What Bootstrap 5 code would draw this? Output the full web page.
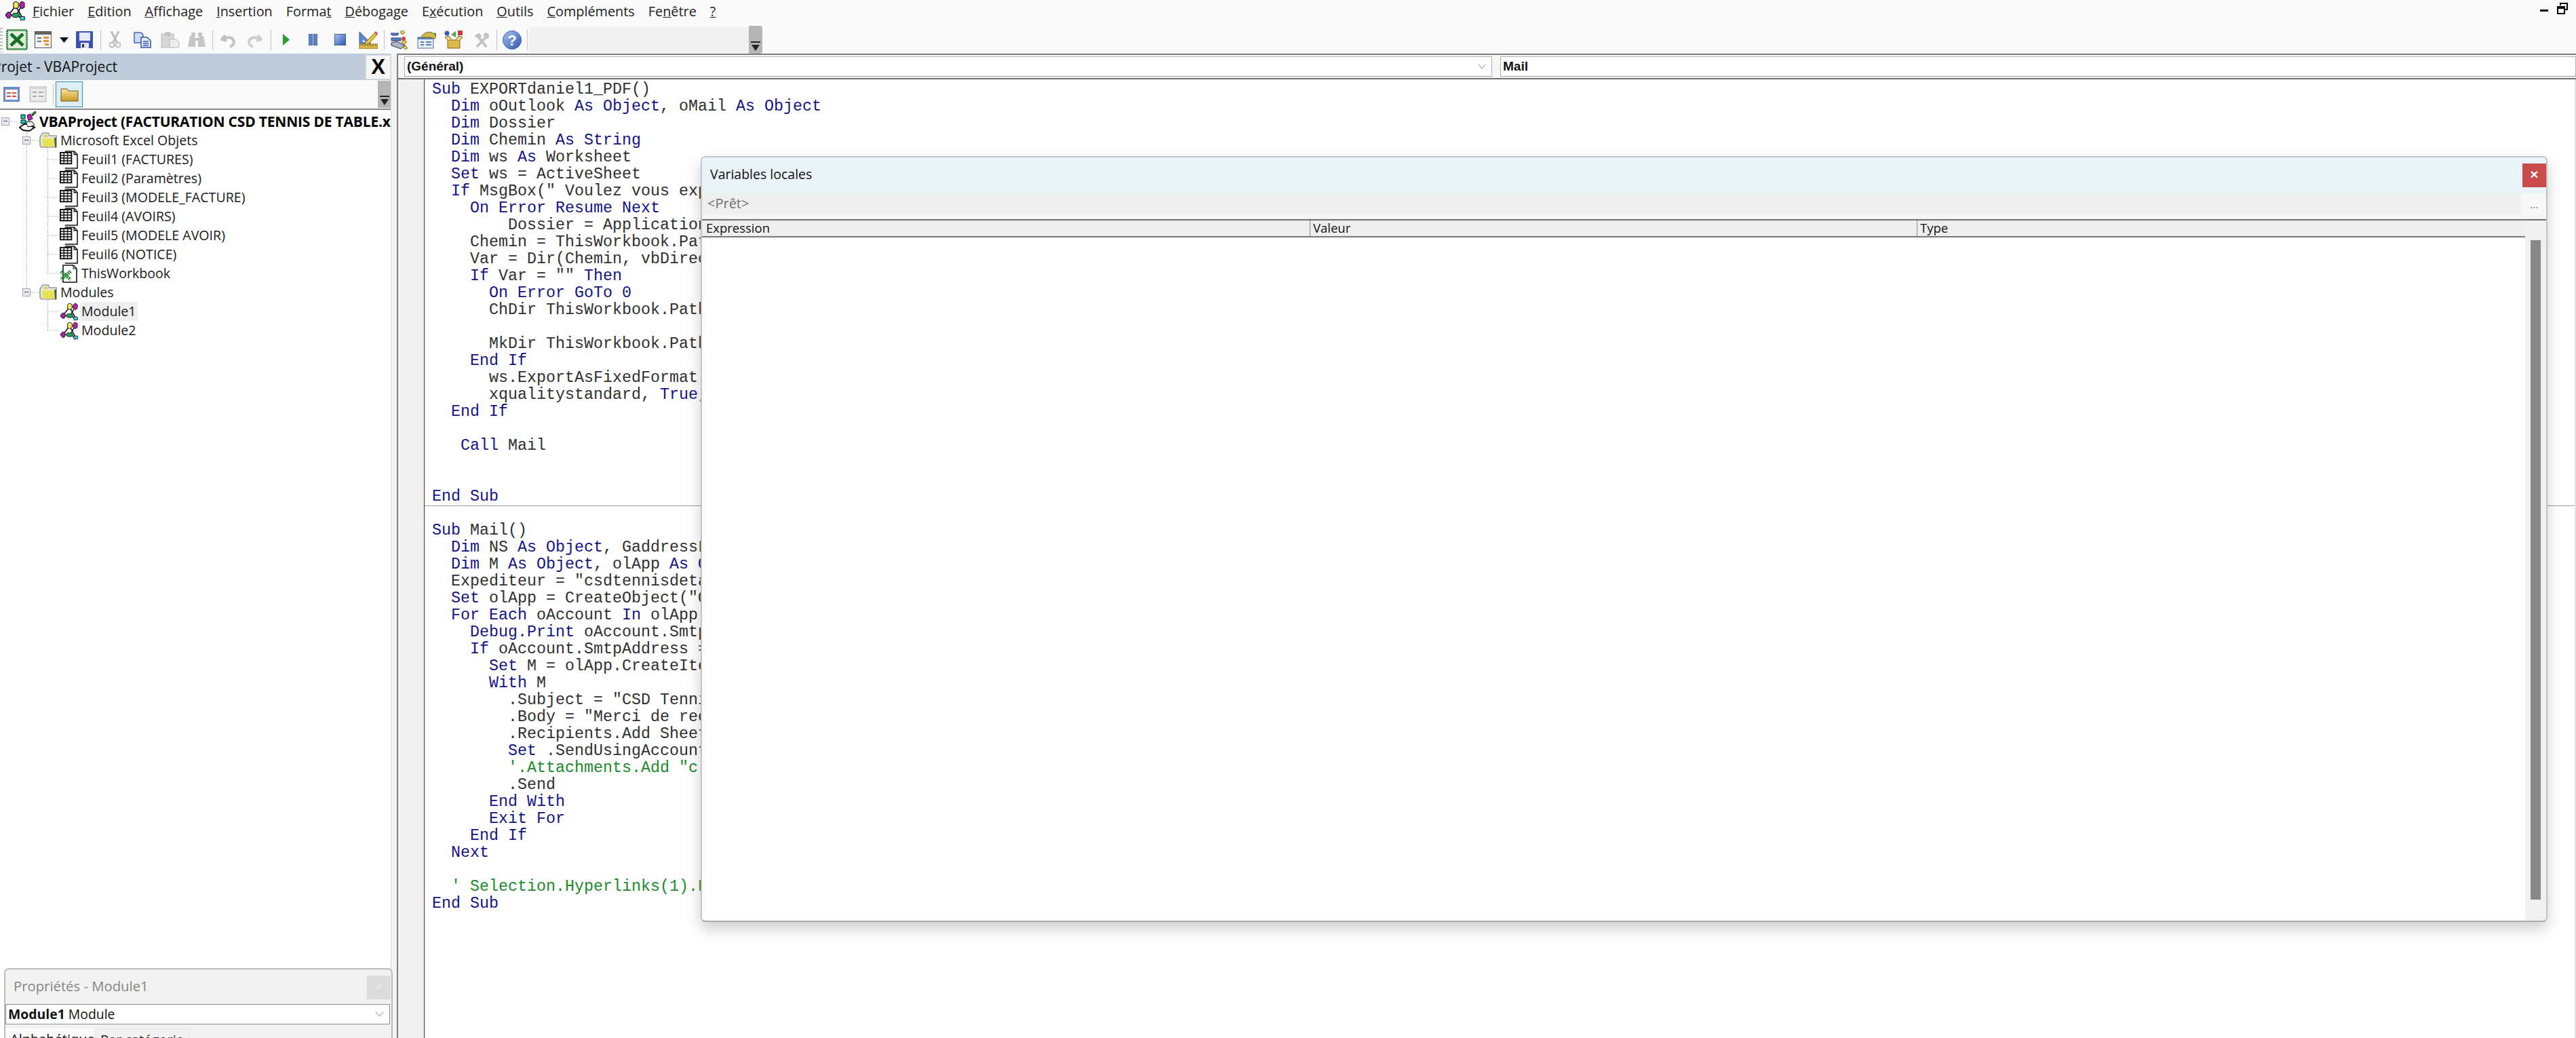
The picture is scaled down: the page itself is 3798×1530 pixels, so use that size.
<!DOCTYPE html>
<html lang="fr">
<head>
<meta charset="utf-8">
<title>Microsoft Visual Basic for Applications</title>
<link href="https://cdn.jsdelivr.net/npm/bootstrap@5.3.0/dist/css/bootstrap.min.css" rel="stylesheet">
<style>
html,body{height:1530px;width:3798px;overflow:hidden;background:#fff;margin:0;font-family:"Open Sans","Noto Sans",sans-serif;font-size:19px;color:#111}
.svg-defs{position:absolute;width:0;height:0;overflow:hidden}
.vbe-top{background:#fafafa;height:79px}
.vbe-menu{height:38px;padding-left:7px;align-items:center}
.app-ic{margin-right:11px;margin-top:-6px}
.menu-item{margin-right:20px;line-height:1;color:#222;font-size:19.85px;margin-top:-4px;white-space:nowrap}
.win-ctl{margin-left:auto;margin-right:12px;gap:13px;align-self:flex-start;padding-top:4px}
.tbar{height:41px;align-items:center}
.grip-dots{width:4px;height:36px;background:repeating-linear-gradient(#bbb 0 2px,transparent 2px 5px)}
.tsep{width:1px;height:30px;background:#c4c4c4;flex:none}
.ml8{margin-left:8px}.ml9{margin-left:9px}.ml10{margin-left:10px}.ml11{margin-left:11px}.ml12{margin-left:12px}.ml14{margin-left:14px}.ml16{margin-left:16px}.ml17{margin-left:17px}.ml19{margin-left:19px}.ml25{margin-left:25px}.ml28{margin-left:28px}.ml5{margin-left:5px}.ml2{margin-left:2px}
.tb-empty{width:324px;height:38px;background:#f0f0f0}
.tb-grip{width:20px;height:41px;background:#b5b5b5;border-radius:0 4px 4px 0;display:flex;flex-direction:column;justify-content:flex-end;align-items:center;padding-bottom:4px;flex:none}
.grip-bar{width:14px;height:2px;background:#222;margin-bottom:3px}
.grip-arrow{width:0;height:0;border-left:6px solid transparent;border-right:6px solid transparent;border-top:9px solid #222}
.vbe-main{height:1451px;position:relative}
.proj-panel{width:577px;flex:none;height:100%;position:relative;overflow:hidden;border-right:1px solid #ddd}
.proj-title{height:39px;background:#bfcddb;padding-left:0;align-items:center;position:relative}
.proj-title span{margin-left:-11px;font-size:21px;color:#111;white-space:nowrap}
.proj-x{margin-left:auto;width:37px;height:36px;background:#f6f6f6;border:1px solid #ddd;font-family:"Liberation Sans",sans-serif;font-weight:700;font-size:31px;line-height:34px;text-align:center;color:#000}
.proj-tools{height:44px;background:#fafafa;align-items:center;border-bottom:2px solid #888}
.ptool-sel{width:40px;height:38px;border:1px solid #2e8dc0;background:#deeef8;display:flex;align-items:center;justify-content:center;margin-left:3px}
.ptool-grip{width:19px;height:40px;margin-left:auto;background:#b5b5b5;display:flex;flex-direction:column;justify-content:flex-end;align-items:center;padding-bottom:4px}
.ptool-sep{width:1px;height:30px;background:#c4c4c4;margin-left:9px}
.tree{position:relative;padding-top:3px;font-size:19.6px}
.tree-lines{position:absolute;left:0;top:0}
.tree-row{height:28px;display:flex;align-items:center;white-space:nowrap;position:relative}
.tree-row svg{flex:none}
.d0{padding-left:2px}.d1{padding-left:33px}.d2{padding-left:88px}
.tbox{width:12px;height:12px;background:#e6e8ee;border:1px solid #a6aab2;position:relative;flex:none}
.tbox::after{content:"";position:absolute;left:2px;right:2px;top:4px;height:1px;background:#45506a}
.d0 .tbox{margin-right:11px}.d1 .tbox{margin-right:13px}
.lbl{padding:0 2px;line-height:28px;color:#1a1a1a}
.d0 .lbl{font-weight:700;color:#000;margin-left:1px;font-size:21px;letter-spacing:-.2px}
.d1 .lbl{margin-left:3px}.d2 .lbl{margin-left:3px}
.lbl-sel{background:#efefef}
.prop-win{position:absolute;left:6px;top:1348px;width:573px;height:110px;background:#f2f2f2;border:2px solid #bcbcbc;border-bottom:0;border-radius:7px 7px 0 0;overflow:hidden}
.prop-title{height:51px;padding-left:12px;padding-bottom:3px;color:#858585;font-size:20.3px;align-items:center;position:relative}
.prop-x{position:absolute;right:1px;top:9px;width:35px;height:35px;background:#dcdcdc;color:#f0f0f0;font-size:16px;line-height:33px;text-align:center}
.prop-combo{height:30px;margin:0 2px 0 0;background:#fff;border:1px solid #8d8d8d;padding-left:3px;align-items:center;font-size:19.4px;color:#111;position:relative}
.chev{margin-left:auto;margin-right:8px}
.prop-tabs{padding-top:6px;font-size:20px}
.ptab{padding:0 7px;height:30px;line-height:31px}
.ptab-on{background:#fafafa;width:130px}.ptab-off{border:1px solid #e8e8e8;margin-left:2px;color:#222}
.splitter{width:8px;flex:none;background:#f3f3f3}
.code-area{flex:1 1 auto;border-left:2px solid #7f7f7f;min-width:0;height:100%;display:flex;flex-direction:column}
.combo-row{height:38px;flex:none;background:#f6f6f6;border-top:2px solid #7d7d7d;border-bottom:2px solid #6f6f6f;padding:2px 0 2px 9px;gap:12px}
.vcombo{height:30px;background:#fff;border:1px solid #b0b0b0;border-bottom-color:#999;font-family:"Liberation Sans",sans-serif;font-weight:700;font-size:19px;line-height:28px;padding-left:3px;color:#111;position:relative;display:flex;align-items:center}
.vcombo-a{width:1604px;flex:none}
.vcombo-b{flex:1 1 auto}
.code-pane{flex:1 1 auto;min-height:0;display:flex;overflow:hidden}
.code-margin{width:38px;flex:none;background:#f0f0f0;border-right:1px solid #333;box-sizing:content-box}
.code-body{flex:1 1 auto;min-width:0;overflow:hidden;padding-top:3px;border-right:2px solid #e2e2e2}
.proc{margin:0;padding:0 0 0 11px;font-family:"Liberation Mono","DejaVu Sans Mono",monospace;font-size:23.33px;line-height:25px;color:#303030;white-space:pre;overflow:hidden}
.proc-first{border-bottom:1px solid #9a9a9a;margin-bottom:-1px}
.kw{color:#14148a}
.cm{color:#1a8a2a}
.watch-win{position:absolute;left:1033px;top:230px;width:2723px;height:1129px;background:#fff;border:2px solid #c4c4c4;border-bottom-color:#aaa;border-radius:7px;box-shadow:0 10px 22px rgba(0,0,0,.2);overflow:hidden;display:flex;flex-direction:column;z-index:5}
.watch-title{height:53px;flex:none;background:#e9f3f8;padding-left:12px;padding-bottom:3px;align-items:center;position:relative;font-size:19.5px;color:#111}
.watch-x{position:absolute;right:0;top:9px;width:35px;height:35px;background:#c94b4b;color:#fff;font-family:"Liberation Sans",sans-serif;font-weight:700;font-size:21px;line-height:32px;text-align:center}
.watch-sub{height:38px;flex:none;background:#f4f4f4;position:relative;padding-left:0}
.watch-ctx{width:2680px;height:31px;background:#efefef;color:#707070;padding-left:8px;font-size:20px;line-height:30px;flex:none}
.watch-dots{position:absolute;right:1px;top:1px;width:33px;height:29px;background:#f8f8f8;color:#777;text-align:center;font-size:15px;line-height:30px}
.watch-body{flex:1 1 auto;min-height:0;border-top:2px solid #6e6e6e;display:flex}
.watch-main{flex:1 1 auto;min-width:0}
.watch-head{height:25px;background:#efefef;border-bottom:2px solid #777;display:grid;grid-template-columns:896px 895px 1fr;font-size:18.5px;line-height:22px;color:#111}
.watch-head div{padding-left:6px;white-space:nowrap}
.watch-head div+div{border-left:1px solid #8a8a8a;padding-left:4px}
.watch-scroll{width:31px;flex:none;background:#f0f0f0;padding:29px 8px 31px}
.watch-thumb{height:100%;background:#888;width:15px}
</style>
</head>
<body>
<svg class="svg-defs" aria-hidden="true">
  <defs>
  <linearGradient id="gblue" x1="0" y1="0" x2="1" y2="1"><stop offset="0" stop-color="#a9c4ee"/><stop offset="1" stop-color="#2e55b0"/></linearGradient>
  <linearGradient id="gfold" x1="0" y1="0" x2="0" y2="1"><stop offset="0" stop-color="#fbe29a"/><stop offset="1" stop-color="#c99a26"/></linearGradient>
  </defs>
  <symbol id="mod" viewBox="0 0 28 28">
    <path d="M5 20 15 7M5 20h11l9 5M15 7l9-1M15 7l10 18M24 6 16 20" stroke="#111" stroke-width="1.6" fill="none"/>
    <path d="M1 20 4 16h3l2 4-2 4H4z" fill="#b21bb0" stroke="#222"/>
    <path d="M12 3l3-2 4 2v6l-4 2-3-2z" fill="#f1e65a" stroke="#222"/>
    <path d="M21 3l3-2 3 2v6l-3 2-3-2z" fill="#c11cb8" stroke="#222"/>
    <ellipse cx="15" cy="20" rx="5" ry="3" fill="#17a35a" stroke="#222"/>
    <path d="M21 22h6l1 4-6 1z" fill="#35d6d6" stroke="#222"/>
  </symbol>
  <symbol id="sheet" viewBox="0 0 28 28">
    <path d="M8 1h14l5 5v21H8" fill="#fff" stroke="#111" stroke-width="1.6"/>
    <path d="M22 1v5h5" fill="none" stroke="#111" stroke-width="1.4"/>
    <rect x="1" y="3" width="17" height="17" fill="#fff" stroke="#111" stroke-width="2"/>
    <path d="M1 7.500h17M1 11.500h17M1 15.500h17M6.500 3v17M12 3v17" stroke="#111" stroke-width="1.5"/>
  </symbol>
  <symbol id="fold" viewBox="0 0 26 24">
    <path d="M1 7 5 1h8l2 4h10v17H3L1 20z" fill="#e4e4e4" stroke="#777" stroke-width="1.2"/>
    <path d="M6 4h6l1 3H6z" fill="#ddd24d"/>
    <path d="M4 9h20v12H5z" fill="#ecec5a"/>
    <path d="M5 11h18M5 13h18M5 15h18M5 17h18M5 19h18" stroke="#c7c748" stroke-width=".9" stroke-dasharray="1.500 1.500"/>
    <path d="M22 8h3v14h-2z" fill="#555"/>
  </symbol>
</svg>

<header class="vbe-top">
  <nav class="vbe-menu d-flex">
    <svg class="app-ic" width="30" height="30" viewBox="0 0 28 28"><use href="#mod"/></svg>
    <span class="menu-item"><u>F</u>ichier</span>
    <span class="menu-item"><u>E</u>dition</span>
    <span class="menu-item"><u>A</u>ffichage</span>
    <span class="menu-item"><u>I</u>nsertion</span>
    <span class="menu-item">Forma<u>t</u></span>
    <span class="menu-item"><u>D</u>ébogage</span>
    <span class="menu-item">E<u>x</u>écution</span>
    <span class="menu-item"><u>O</u>utils</span>
    <span class="menu-item"><u>C</u>ompléments</span>
    <span class="menu-item">Fe<u>n</u>être</span>
    <span class="menu-item"><u>?</u></span>
    <div class="win-ctl d-flex">
      <svg width="12" height="14" viewBox="0 0 12 14"><rect y="10" width="12" height="3" fill="#000"/></svg>
      <svg width="16" height="18" viewBox="0 0 16 18"><path d="M5 4V1h10v9h-3" fill="none" stroke="#000" stroke-width="2"/><rect x="1" y="6" width="10" height="10" fill="none" stroke="#000" stroke-width="2"/><path d="M1 8h10" stroke="#000" stroke-width="2"/></svg>
    </div>
  </nav>
  <div class="tbar d-flex">
    <div class="grip-dots"></div>
    <svg class="ml5" width="32" height="31" viewBox="0 0 32 31"><rect x="1.500" y="1.500" width="29" height="28" fill="#dfeedd" stroke="#1c7a2c" stroke-width="3" stroke-dasharray="2 1"/><path d="M7 7 25 24M25 7 7 24" stroke="#1d6e2b" stroke-width="5"/></svg>
    <svg class="ml10" width="25" height="25" viewBox="0 0 25 25"><rect x=".5" y=".5" width="24" height="24" fill="#f4f4f4" stroke="#555"/><rect x="1" y="1" width="23" height="4" fill="#666"/><path d="M4 10h6M4 15h6" stroke="#777" stroke-width="2"/><path d="M13 8h8v3h-8zM13 13h8v3h-8zM15 18h6v3h-6z" fill="#e1953a"/></svg>
    <svg class="ml12" width="13" height="8" viewBox="0 0 13 8"><path d="M0 0h13L6.500 8z" fill="#111"/></svg>
    <svg class="ml11" width="25" height="25" viewBox="0 0 25 25"><rect width="25" height="25" rx="1" fill="#3e52b5"/><rect x="5" y="2" width="16" height="12" fill="#e6e9f8"/><rect x="7" y="17" width="12" height="8" fill="#dfe2ee"/><rect x="9" y="19" width="3" height="5" fill="#333"/></svg>
    <div class="tsep ml11"></div>
    <svg class="ml12" width="17" height="25" viewBox="0 0 17 25" fill="none" stroke="#bcbcbc" stroke-width="2"><path d="M3 0l8 16M14 0 6 16" stroke-width="3"/><circle cx="4" cy="20" r="3.500"/><circle cx="13" cy="20" r="3.500"/></svg>
    <svg class="ml19" width="26" height="24" viewBox="0 0 26 24"><path d="M1 1h10l3 3v12H1z" fill="#cfdcf4" stroke="#3e66b8" stroke-width="1.500"/><path d="M11 8h9l5 5v10H11z" fill="#e9f0fb" stroke="#2c55a8" stroke-width="1.500"/><path d="M14 14h8M14 17h8M14 20h8" stroke="#2c55a8" stroke-width="1.500"/></svg>
    <svg class="ml14" width="28" height="24" viewBox="0 0 28 24"><rect x="1" y="3" width="18" height="20" fill="#d6d6d6" stroke="#bbb"/><rect x="6" y="0" width="8" height="6" fill="#c4c4c4"/><path d="M13 11h10l4 4v8H13z" fill="#ececec" stroke="#bbb"/></svg>
    <svg class="ml12" width="26" height="24" viewBox="0 0 26 24" fill="#c6c6c6"><path d="M3 6h7v3h6V6h7l3 16H15v-9h-4v9H0z"/><rect x="5" y="1" width="6" height="5"/><rect x="15" y="1" width="6" height="5"/></svg>
    <div class="tsep ml10"></div>
    <svg class="ml11" width="23" height="22" viewBox="0 0 23 22"><path d="M7 4l-5 6 7 2M3 10c8-5 16-3 17 4 0 3-3 6-6 7" fill="none" stroke="#c2c2c2" stroke-width="4"/></svg>
    <svg class="ml16" width="23" height="22" viewBox="0 0 23 22"><path d="M16 4l5 6-7 2M20 10C12 5 4 7 3 14c0 3 3 6 6 7" fill="none" stroke="#cfcfcf" stroke-width="4"/></svg>
    <div class="tsep ml12"></div>
    <svg class="ml17" width="10" height="17" viewBox="0 0 10 17"><path d="M0 0l10 8.500L0 17z" fill="#2c9c35"/></svg>
    <svg class="ml28" width="13" height="17" viewBox="0 0 13 17"><rect width="5.500" height="17" fill="#5d83c8" stroke="#3a5ea8"/><rect x="7.500" width="5.500" height="17" fill="#5d83c8" stroke="#3a5ea8"/></svg>
    <svg class="ml25" width="17" height="17" viewBox="0 0 17 17"><rect x=".5" y=".5" width="16" height="16" fill="url(#gblue)" stroke="#3a5ea8"/></svg>
    <svg class="ml19" width="28" height="26" viewBox="0 0 28 26"><path d="M1 1v17h17z" fill="#5c86cc" stroke="#2d57a8"/><path d="M6 12v4h4z" fill="#fff"/><path d="M10 16 24 2l3 3-13 14-6 2z" fill="#e5c33c" stroke="#8a6e15"/><path d="M23 2l2-2 3 3-2 3z" fill="#d24a4a"/><rect x="1" y="19" width="27" height="7" fill="#d6b448" stroke="#8f7420"/><path d="M5 19v3M9 19v3M13 19v3M17 19v3M21 19v3M25 19v3" stroke="#7d6418"/></svg>
    <div class="tsep ml9"></div>
    <svg class="ml8" width="28" height="28" viewBox="0 0 28 28"><path d="M1 4h12l-2 3H3zM2 11h14v4H2z" fill="#5c7fc0" stroke="#223f80"/><path d="M15 2l4-2 3 3-4 3zM17 17l5-3 3 3-5 4zM19 23l4-1 3 4-4 2z" fill="#e7c75a" stroke="#8e7420"/><circle cx="20" cy="12" r="3" fill="#d8463a"/><path d="M2 18l8-2 12 6-6 5-14-5z" fill="#aab5c8" stroke="#333"/></svg>
    <svg class="ml12" width="28" height="26" viewBox="0 0 28 26"><rect x="1" y="9" width="23" height="16" fill="#e8eef8" stroke="#5b6f93"/><rect x="1" y="9" width="23" height="3" fill="#5b7fb8"/><path d="M5 16h5M5 20h5M13 16h8M13 20h8" stroke="#5b7fb8" stroke-width="2"/><path d="M6 9c3-7 11-9 16-7l6 5-2 4-7-2z" fill="#d4b84e" stroke="#7b6a22"/><path d="M24 2l4 1v6z" fill="#3aa14a"/></svg>
    <svg class="ml12" width="28" height="27" viewBox="0 0 28 27"><circle cx="4" cy="4" r="3.500" fill="#3d57b3"/><rect x="20" y="0" width="7" height="7" fill="#c93b33"/><path d="M17 1v9l-7-4z" fill="#45a84e"/><path d="M5 14h18v12H5z" fill="#dcb94a" stroke="#7e661c"/><path d="M5 14 1 10l6-2 4 6M23 14l4-4-6-2-4 6" fill="#ecd27a" stroke="#7e661c"/></svg>
    <svg class="ml16" width="22" height="22" viewBox="0 0 22 22" stroke="#c4c4c4" fill="none"><path d="M4 21 18 6" stroke-width="4"/><path d="M18 21 6 6" stroke-width="4"/><path d="M1 5l6-4 4 4-5 4zM16 1a5 5 0 0 0 1 8l4-1c1-3 0-5-1-7z" fill="#c4c4c4"/></svg>
    <div class="tsep ml11"></div>
    <svg class="ml8" width="28" height="28" viewBox="0 0 28 28"><circle cx="14" cy="14" r="13.500" fill="url(#gblue)" stroke="#3a62b4"/><text x="14" y="22" text-anchor="middle" font-family="Liberation Sans,sans-serif" font-weight="700" font-size="22" fill="#fff">?</text></svg>
    <div class="tsep ml8"></div>
    <div class="tb-empty ml2"></div>
    <div class="tb-grip"><div class="grip-bar"></div><div class="grip-arrow"></div></div>
  </div>
</header>

<main class="vbe-main d-flex">
  <aside class="proj-panel">
    <div class="proj-title d-flex"><span>Projet - VBAProject</span><div class="proj-x">X</div></div>
    <div class="proj-tools d-flex">
      <svg class="ml5" width="24" height="22" viewBox="0 0 24 22"><rect width="24" height="22" fill="#6a8cc8"/><rect x="3" y="4" width="18" height="15" fill="#f2f5fb"/><path d="M5 8h6v2H5zM13 8h6v2h-6zM5 13h6v2H5zM13 13h6v2h-6z" fill="#d8523c"/></svg>
      <svg class="ml14" width="26" height="24" viewBox="0 0 26 24"><rect width="26" height="24" fill="#d6d6d6"/><rect x="3" y="4" width="20" height="17" fill="#ececec"/><path d="M5 9h6M14 9h7M5 15h6M14 15h7" stroke="#aaa" stroke-width="2"/></svg>
      <div class="ptool-sep"></div>
      <div class="ptool-sel"><svg width="27" height="22" viewBox="0 0 27 22"><path d="M1 3h9l2 3h14v15H1z" fill="url(#gfold)" stroke="#6d5a20"/></svg></div>
      <div class="ptool-grip"><div class="grip-bar"></div><div class="grip-arrow"></div></div>
    </div>
    <div class="tree">
      <svg class="tree-lines" width="130" height="340" viewBox="0 0 130 340" fill="none" stroke="#888" stroke-dasharray="1 2">
        <path d="M14.500 17H25M39.500 28V267M45 45H58M45 269H58M70.500 52V241M70.500 281V325M70 73H88M70 101H88M70 129H88M70 157H88M70 185H88M70 213H88M70 241H88M70 297H88M70 325H88"/>
      </svg>
      <div class="tree-row d0"><span class="tbox"></span><svg width="30" height="30" viewBox="0 0 30 30"><path d="M4 24c4-4 8-6 11-5l11 5-8 5-9-1z" fill="#fff" stroke="#111" stroke-width="2"/><path d="M6 5h6v6H6zM6 13h7v5H6z" fill="#17c7c7" stroke="#111"/><path d="M15 6l5-2 3 7-6 3z" fill="#c01cb8" stroke="#111"/><path d="M22 4l5-4 1 2-5 5z" fill="#2a9a3a" stroke="#111"/><path d="M13 16l9-1 4 6-10 2z" fill="#eee" stroke="#111"/></svg><span class="lbl">VBAProject (FACTURATION CSD TENNIS DE TABLE.xlsm)</span></div>
      <div class="tree-row d1"><span class="tbox"></span><svg width="26" height="24"><use href="#fold"/></svg><span class="lbl">Microsoft Excel Objets</span></div>
      <div class="tree-row d2"><svg width="27" height="27"><use href="#sheet"/></svg><span class="lbl">Feuil1 (FACTURES)</span></div>
      <div class="tree-row d2"><svg width="27" height="27"><use href="#sheet"/></svg><span class="lbl">Feuil2 (Paramètres)</span></div>
      <div class="tree-row d2"><svg width="27" height="27"><use href="#sheet"/></svg><span class="lbl">Feuil3 (MODELE_FACTURE)</span></div>
      <div class="tree-row d2"><svg width="27" height="27"><use href="#sheet"/></svg><span class="lbl">Feuil4 (AVOIRS)</span></div>
      <div class="tree-row d2"><svg width="27" height="27"><use href="#sheet"/></svg><span class="lbl">Feuil5 (MODELE AVOIR)</span></div>
      <div class="tree-row d2"><svg width="27" height="27"><use href="#sheet"/></svg><span class="lbl">Feuil6 (NOTICE)</span></div>
      <div class="tree-row d2"><svg width="27" height="27" viewBox="0 0 27 27"><path d="M5 1h15l5 5v20H5z" fill="#fff" stroke="#111" stroke-width="1.600"/><path d="M20 1v5h5" fill="none" stroke="#111"/><path d="M2 10l14 12M16 10 2 22" stroke="#2c8a3c" stroke-width="5" stroke-dasharray="2 1"/></svg><span class="lbl">ThisWorkbook</span></div>
      <div class="tree-row d1"><span class="tbox"></span><svg width="26" height="24"><use href="#fold"/></svg><span class="lbl">Modules</span></div>
      <div class="tree-row d2"><svg width="27" height="27"><use href="#mod"/></svg><span class="lbl lbl-sel">Module1</span></div>
      <div class="tree-row d2"><svg width="27" height="27"><use href="#mod"/></svg><span class="lbl">Module2</span></div>
    </div>
  </aside>
  <div class="splitter"></div>
  <section class="code-area">
    <div class="combo-row d-flex">
      <div class="vcombo vcombo-a">(Général)<svg class="chev" width="12" height="8" viewBox="0 0 12 8"><path d="M1 1l5 6 5-6" fill="none" stroke="#888"/></svg></div>
      <div class="vcombo vcombo-b">Mail</div>
    </div>
    <div class="code-pane">
      <div class="code-margin"></div>
      <div class="code-body">
<pre class="proc proc-first"><span class="kw">Sub</span> EXPORTdaniel1_PDF()
  <span class="kw">Dim</span> oOutlook <span class="kw">As</span> <span class="kw">Object</span>, oMail <span class="kw">As</span> <span class="kw">Object</span>
  <span class="kw">Dim</span> Dossier
  <span class="kw">Dim</span> Chemin <span class="kw">As</span> <span class="kw">String</span>
  <span class="kw">Dim</span> ws <span class="kw">As</span> Worksheet
  <span class="kw">Set</span> ws = ActiveSheet
  <span class="kw">If</span> MsgBox(" Voulez vous exporter
    <span class="kw">On Error Resume Next</span>
        Dossier = Application
    Chemin = ThisWorkbook.Path
    Var = Dir(Chemin, vbDirectory)
    <span class="kw">If</span> Var = "" <span class="kw">Then</span>
      <span class="kw">On Error GoTo 0</span>
      ChDir ThisWorkbook.Path

      MkDir ThisWorkbook.Path
    <span class="kw">End If</span>
      ws.ExportAsFixedFormat
      xqualitystandard, <span class="kw">True</span>,
  <span class="kw">End If</span>

   <span class="kw">Call</span> Mail


<span class="kw">End Sub</span></pre>
<pre class="proc">

<span class="kw">Sub</span> Mail()
  <span class="kw">Dim</span> NS <span class="kw">As</span> <span class="kw">Object</span>, GaddressList
  <span class="kw">Dim</span> M <span class="kw">As</span> <span class="kw">Object</span>, olApp <span class="kw">As</span> <span class="kw">Object</span>
  Expediteur = "csdtennisdetable
  <span class="kw">Set</span> olApp = CreateObject("Outlook
  <span class="kw">For Each</span> oAccount <span class="kw">In</span> olApp.Session
    <span class="kw">Debug.Print</span> oAccount.SmtpAddress
    <span class="kw">If</span> oAccount.SmtpAddress =
      <span class="kw">Set</span> M = olApp.CreateItem
      <span class="kw">With</span> M
        .Subject = "CSD Tennis
        .Body = "Merci de recevoir
        .Recipients.Add Sheets
        <span class="kw">Set</span> .SendUsingAccount
        <span class="cm">'.Attachments.Add "c:</span>
        .Send
      <span class="kw">End With</span>
      <span class="kw">Exit For</span>
    <span class="kw">End If</span>
  <span class="kw">Next</span>

  <span class="cm">' Selection.Hyperlinks(1).Follow</span>
<span class="kw">End Sub</span></pre>
      </div>
    </div>
  </section>
  <div class="prop-win">
    <div class="prop-title d-flex">Propriétés - Module1<span class="prop-x">×</span></div>
    <div class="prop-combo d-flex"><b>Module1</b>&nbsp;Module<svg class="chev" width="13" height="8" viewBox="0 0 13 8"><path d="M1 1l5.500 6L12 1" fill="none" stroke="#888"/></svg></div>
    <div class="prop-tabs d-flex"><div class="ptab ptab-on">Alphabétique</div><div class="ptab ptab-off">Par catégorie</div></div>
  </div>
</main>

<div class="watch-win">
  <div class="watch-title d-flex">Variables locales<span class="watch-x">×</span></div>
  <div class="watch-sub"><div class="watch-ctx">&lt;Prêt&gt;</div><div class="watch-dots">...</div></div>
  <div class="watch-body">
    <div class="watch-main">
      <div class="watch-head"><div>Expression</div><div>Valeur</div><div>Type</div></div>
    </div>
    <div class="watch-scroll"><div class="watch-thumb"></div></div>
  </div>
</div>
<script src="https://cdn.jsdelivr.net/npm/bootstrap@5.3.0/dist/js/bootstrap.bundle.min.js"></script>
</body>
</html>
